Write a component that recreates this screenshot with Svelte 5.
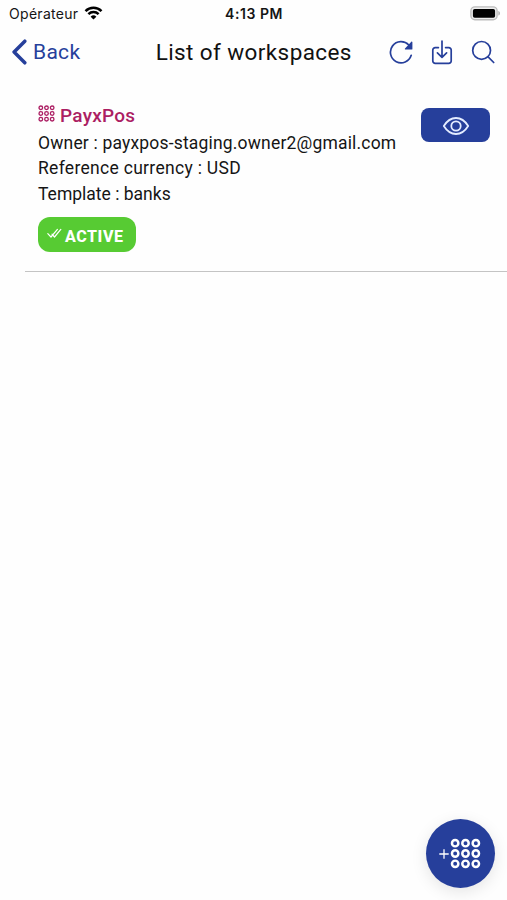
<script>
	const title = 'List of workspaces';
	const carrier = 'Opérateur';
	const time = '4:13 PM';

	const workspaces = [
		{
			name: 'PayxPos',
			owner: 'payxpos-staging.owner2@gmail.com',
			currency: 'USD',
			template: 'banks',
			status: 'ACTIVE'
		}
	];

	const dots = [0, 1, 2, 3, 4, 5, 6, 7, 8];
</script>

{#snippet grid(size, radius, stroke)}
	<svg class="grid-icon" width={size} height={size} viewBox="0 0 30 30" aria-hidden="true">
		{#each dots as dot}
			<circle
				cx={5 + (dot % 3) * 10}
				cy={5 + Math.floor(dot / 3) * 10}
				r={radius}
				fill="none"
				stroke="currentColor"
				stroke-width={stroke}
			/>
		{/each}
	</svg>
{/snippet}

<div class="screen">
	<div class="status-bar">
		<div class="carrier">
			<span>{carrier}</span>
			<svg width="19" height="14" viewBox="0 0 18 14" aria-hidden="true">
				<g fill="none" stroke="#000" stroke-width="2.5">
					<path d="M1 5.1a11.4 11.4 0 0 1 16 0" />
					<path d="M3.9 8.2a7.3 7.3 0 0 1 10.2 0" />
				</g>
				<path d="M9 13.6 6.1 10.7a4.1 4.1 0 0 1 5.8 0z" />
			</svg>
		</div>
		<span class="time">{time}</span>
		<div class="battery">
			<svg width="31" height="15" viewBox="0 0 31 15" aria-hidden="true">
				<rect x="0.9" y="0.9" width="26.2" height="12.8" rx="4" fill="#eee" stroke="#bcbcbc" stroke-width="1.4" />
				<rect x="2.9" y="2.9" width="22.2" height="8.8" rx="1.8" />
				<path d="M28.4 5c2 .6 2 4 0 4.6z" fill="#aaa" />
			</svg>
		</div>
	</div>

	<header class="toolbar">
		<button class="back">
			<svg width="16" height="26" viewBox="0 0 16 26" aria-hidden="true">
				<path d="M13.8 2.2 3.1 13l10.7 10.8" fill="none" stroke="currentColor" stroke-width="3.5" stroke-linecap="round" stroke-linejoin="round" />
			</svg>
			<span>Back</span>
		</button>
		<h1>{title}</h1>
		<div class="actions">
			<button aria-label="refresh">
				<svg width="24" height="24" viewBox="0 0 24 24" aria-hidden="true">
					<path d="M22.2 15.3A10.6 10.6 0 1 1 19.8 5" fill="none" stroke="currentColor" stroke-width="1.7" stroke-linecap="round" />
					<path d="M23.4 2.3v6.6a.7.7 0 0 1-.7.7h-6.2c-.6 0-.9-.7-.5-1.1l6.3-6.7c.4-.4 1.1-.1 1.1.5z" fill="currentColor" />
				</svg>
			</button>
			<button aria-label="download">
				<svg width="22" height="26" viewBox="0 0 22 26" fill="none" stroke="currentColor" stroke-width="1.7" stroke-linecap="round" stroke-linejoin="round" aria-hidden="true">
					<path d="M14.6 8.6h3.2a2.4 2.4 0 0 1 2.4 2.4v10.9a2.4 2.4 0 0 1-2.4 2.4H4.2a2.4 2.4 0 0 1-2.4-2.4V11a2.4 2.4 0 0 1 2.4-2.4h3.2" />
					<path d="M11 2v16.2M6.4 13.8l4.6 4.5 4.6-4.5" />
				</svg>
			</button>
			<button aria-label="search">
				<svg width="24" height="24" viewBox="0 0 24 24" fill="none" stroke="currentColor" stroke-width="1.7" stroke-linecap="round" aria-hidden="true">
					<circle cx="10.6" cy="10.4" r="8.9" />
					<path d="m17.1 16.9 5.6 5.6" />
				</svg>
			</button>
		</div>
	</header>

	<main class="list">
		{#each workspaces as { name, owner, currency, template, status }}
			<div class="item">
				<div class="info">
					<h2>
						{@render grid(17, 3.2, 2.3)}
						<span>{name}</span>
					</h2>
					<p class="owner">Owner : {owner}</p>
					<p class="currency">Reference currency : {currency}</p>
					<p>Template : {template}</p>
					<div class="badge">
						<svg width="15" height="11" viewBox="0 0 15 11" fill="none" stroke="currentColor" stroke-width="1.2" stroke-linecap="round" stroke-linejoin="round" aria-hidden="true">
							<path d="m.8 5.6 3.2 3.4L10.4 1.4M5 6.2l2.5 2.8L13.8 1.4" />
						</svg>
						<span>{status}</span>
					</div>
				</div>
				<button class="view" aria-label="view">
					<svg width="28" height="20" viewBox="0 0 28 20" fill="none" stroke="currentColor" stroke-width="1.8" aria-hidden="true">
						<path d="M1.8 10C4.8 5.2 9 2 14 2s9.2 3.2 12.2 8c-3 4.8-7.2 8-12.2 8S4.8 14.8 1.8 10z" stroke-linejoin="round" />
						<circle cx="14" cy="10" r="4.7" />
					</svg>
				</button>
			</div>
		{/each}
	</main>

	<button class="fab" aria-label="add workspace">
		<svg width="10" height="10" viewBox="0 0 10 10" aria-hidden="true">
			<path d="M5 .3v9.4M.3 5h9.4" stroke="currentColor" stroke-width="1.3" />
		</svg>
		{@render grid(31, 3.1, 2.4)}
	</button>
</div>

<style>
	:global(body) {
		background: #fefefe;
	}

	.screen {
		--primary: #263f9b;
		box-sizing: border-box;
		color: #151515;
		font-family: Roboto, "Liberation Sans", sans-serif;
		height: 900px;
		overflow: hidden;
		position: relative;
		width: 507px;
	}

	button {
		background: none;
		border: none;
		color: var(--primary);
		cursor: pointer;
		display: flex;
		font-family: inherit;
		padding: 0;
	}

	svg {
		display: block;
		flex: none;
	}

	h1,
	h2,
	p {
		font-weight: 400;
		margin: 0;
		white-space: nowrap;
	}

	.status-bar {
		align-items: center;
		display: grid;
		font-family: Inter, "Liberation Sans", sans-serif;
		font-size: 14px;
		grid-template-columns: 1fr auto 1fr;
		height: 27px;
		padding: 0 6px 0 9px;

		& .carrier {
			align-items: center;
			display: flex;
			gap: 6px;
			letter-spacing: 0.3px;

			& svg {
				margin-top: -2px;
			}
		}

		& .time {
			font-weight: 600;
			letter-spacing: 0.55px;
			margin-right: 2px;
		}

		& .battery {
			display: flex;
			justify-content: flex-end;
		}
	}

	.toolbar {
		align-items: center;
		display: grid;
		grid-template-columns: 1fr auto 1fr;
		height: 50px;
		padding: 0 12.5px 0 11px;

		& .back {
			align-items: center;
			font-size: 21px;
			gap: 6px;
			letter-spacing: 0.3px;
		}

		& h1 {
			color: #111;
			font-size: 22.5px;
			letter-spacing: 0.4px;
			margin-left: 2px;
		}

		& .actions {
			align-items: center;
			display: flex;
			gap: 17.7px;
			justify-content: flex-end;
		}
	}

	.list {
		padding: 25px 0 0 25px;
	}

	.item {
		border-bottom: 1px solid #c4c4c4;
		box-sizing: border-box;
		display: flex;
		height: 170px;
		justify-content: space-between;
		padding: 0 17px 0 13px;

		& h2 {
			align-items: center;
			color: #ac1e63;
			display: flex;
			font-size: 19px;
			font-weight: 500;
			gap: 5px;
			height: 28.6px;
			letter-spacing: 0.25px;

			& span {
				margin-top: -1px;
			}

			& :global(.grid-icon) {
				margin-top: -6px;
			}
		}

		& p {
			font-size: 17.5px;
			line-height: 25.7px;
		}

		& .owner {
			letter-spacing: 0.18px;
		}

		& .currency {
			letter-spacing: 0.3px;
		}
	}

	.badge {
		align-items: center;
		background: #57cb33;
		border-radius: 12px;
		box-sizing: border-box;
		color: #fff;
		display: flex;
		font-size: 16px;
		font-weight: 800;
		gap: 3px;
		height: 35px;
		letter-spacing: 0.55px;
		margin-top: 9.4px;
		padding-left: 9px;
		width: 98px;

		& svg {
			margin-top: -2px;
		}

		& span {
			padding-top: 3px;
		}
	}

	.view {
		align-items: center;
		background: var(--primary);
		border-radius: 8px;
		box-sizing: border-box;
		color: #e4ecff;
		height: 34px;
		justify-content: center;
		margin-top: 6px;
		padding-top: 1px;
		width: 69px;
	}

	.fab {
		align-items: center;
		background: var(--primary);
		border-radius: 50%;
		bottom: 12px;
		box-shadow: 0 4px 16px rgba(0, 0, 0, 0.1);
		box-sizing: border-box;
		color: #fff;
		gap: 1px;
		height: 69px;
		justify-content: center;
		padding-right: 2px;
		position: absolute;
		right: 12px;
		width: 69px;
	}
</style>
